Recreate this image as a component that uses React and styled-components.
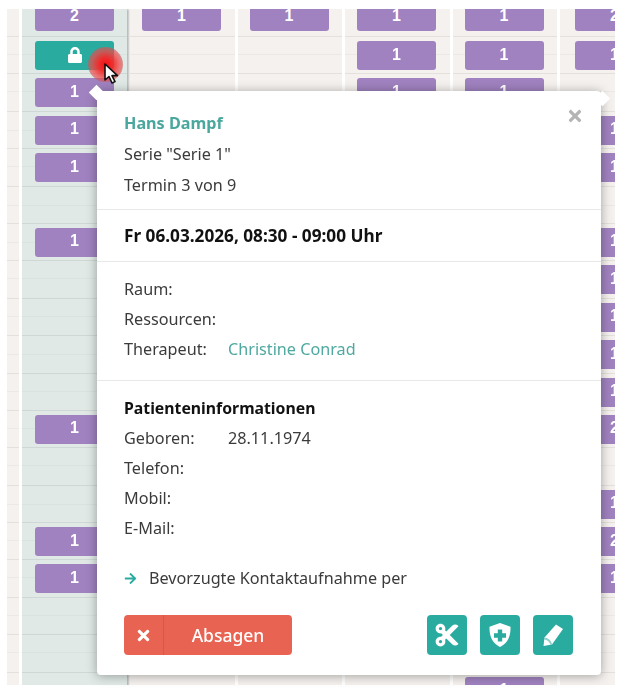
import React from "react";
import styled, { createGlobalStyle } from "styled-components";
import { FaLock, FaTimes, FaCut, FaArrowRight } from "react-icons/fa";

const GlobalStyle = createGlobalStyle`
  html, body {
    margin: 0;
    padding: 0;
    background: #fff;
  }
  * {
    box-sizing: border-box;
  }
`;

const Page = styled.div`
  position: relative;
  width: 623px;
  height: 690px;
  padding: 9px 8px 5px 7px;
  overflow: hidden;
  font-family: "Noto Sans", "Open Sans", sans-serif;
  filter: blur(0.4px);
`;

const Calendar = styled.div`
  display: grid;
  grid-template-columns: 12px 105px repeat(4, 104.5px) 55px;
  column-gap: 3px;
  height: 676px;
  overflow: hidden;
`;

const Column = styled.div`
  background: ${(props) => (props.$today ? "#e0e9e6" : "#f4f1ee")};
  box-shadow: ${(props) => (props.$today ? "2px 0 2px rgba(0, 0, 0, 0.28)" : "none")};
`;

const Slot = styled.div`
  height: 37.4px;
  padding: 4px 0 0 ${(props) => props.$inset || 12}px;
  border-top: 1px solid ${(props) => (props.$today ? "#cfd8d5" : "#e4e0dc")};
  background: linear-gradient(
    to bottom,
    transparent 17.5px,
    ${(props) => (props.$today ? "#d8e2df" : "#ece8e5")} 17.5px,
    ${(props) => (props.$today ? "#d8e2df" : "#ece8e5")} 18.5px,
    transparent 18.5px
  );
`;

const FirstSlot = styled.div`
  height: 27px;
  padding: 0 0 5px ${(props) => props.$inset || 12}px;
  display: flex;
  align-items: flex-end;
  overflow: hidden;
`;

const Event = styled.div`
  flex: none;
  width: 79px;
  height: 29px;
  padding-bottom: 2px;
  display: flex;
  align-items: center;
  justify-content: center;
  border-radius: 3px;
  background: ${(props) => (props.$locked ? "#2aaba0" : "#9f82bf")};
  color: #fff;
  font: bold 16px "Liberation Sans", Arial, sans-serif;
`;

const Popover = styled.div`
  position: absolute;
  left: 97px;
  top: 91px;
  width: 504px;
  height: 584px;
  background: #fff;
  border-radius: 4px;
  box-shadow: 0 1px 11px rgba(0, 0, 0, 0.34);
  color: #3b3b3b;
  font-size: 16.2px;
`;

const Pointer = styled.div`
  position: absolute;
  top: ${(props) => props.$top}px;
  left: ${(props) => props.$left}px;
  width: 11px;
  height: 11px;
  background: #fff;
  transform: rotate(45deg);
`;

const CloseButton = styled.div`
  position: absolute;
  top: 16px;
  right: 17px;
  display: flex;
  color: #b4b4b4;
  font-size: 18px;
`;

const Section = styled.div`
  position: relative;
  padding: ${(props) => props.$pad};
  border-bottom: ${(props) => (props.$last ? "none" : "1px solid #e8e8e8")};
`;

const Line = styled.div`
  height: ${(props) => props.$height || 30}px;
  line-height: ${(props) => props.$height || 30}px;
  white-space: nowrap;
`;

const PatientName = styled(Line)`
  color: #4aa79e;
  font-weight: 700;
`;

const Heading = styled(Line)`
  color: #111;
  font-weight: 700;
  font-size: ${(props) => props.$size || 15.8}px;
`;

const Row = styled.div`
  display: grid;
  grid-template-columns: 104px 1fr;
  height: 30px;
  line-height: 30px;
`;

const LinkText = styled.span`
  color: #4fa9a0;
`;

const ContactLine = styled.div`
  display: flex;
  align-items: center;
  gap: 12px;
  height: 30px;
  margin-top: 20px;
  svg {
    color: #2aaba0;
    font-size: 13px;
  }
`;

const Footer = styled.div`
  display: flex;
  align-items: center;
  justify-content: space-between;
  margin-top: 22px;
  padding-right: 1px;
`;

const CancelButton = styled.div`
  display: flex;
  width: 168px;
  height: 40px;
  border-radius: 4px;
  background: #e96352;
  color: #fff;
  font-size: 17.5px;
  font-weight: 500;
`;

const CancelIcon = styled.div`
  display: flex;
  align-items: center;
  justify-content: center;
  width: 40px;
  border-right: 1px solid #d65847;
  font-size: 17px;
`;

const CancelLabel = styled.div`
  flex: 1;
  text-align: center;
  line-height: 40px;
`;

const Actions = styled.div`
  display: flex;
  gap: 13px;
`;

const IconButton = styled.div`
  display: flex;
  align-items: center;
  justify-content: center;
  width: 40px;
  height: 40px;
  border-radius: 4px;
  background: #2aaba0;
  color: #fff;
  font-size: 26px;
`;

const Halo = styled.div`
  position: absolute;
  left: 88px;
  top: 47px;
  width: 35px;
  height: 35px;
  border-radius: 50%;
  background: radial-gradient(circle, #f01212 0%, #f02a2a 25%, rgba(240, 70, 70, 0.75) 55%, rgba(160, 110, 110, 0.5) 85%, rgba(150, 120, 120, 0.25) 100%);
`;

const Cursor = styled.svg`
  position: absolute;
  left: 104px;
  top: 63px;
`;

const ShieldPlus = () => (
  <svg width="24" height="26" viewBox="0 0 24 26">
    <path fill="#fff" d="M12 1 L22.5 4.8 C22.8 13 20.5 21 12 25 C3.5 21 1.2 13 1.5 4.8 Z" />
    <path fill="#2aaba0" d="M9.8 7.5h4.4v3.8H18v4.4h-3.8v3.8H9.8v-3.8H6v-4.4h3.8z" />
  </svg>
);

const Pencil = () => (
  <svg width="22" height="24" viewBox="0 0 22 24">
    <path fill="#fff" d="M14 1.5 L21 6 L10 21.5 L1.5 23 L2.5 14.5 Z" />
    <path fill="#2aaba0" opacity="0.55" d="M2.5 14.5 C5.5 14.5 9.5 17.5 10 21.5 L8.5 21.8 C7.8 19 5.2 16.8 2.3 16.4 Z" />
  </svg>
);

const dayColumn = { 0: "2", 1: "lock", 2: "1", 3: "1", 4: "1", 6: "1", 11: "1", 14: "1", 15: "1" };

const columns = [
  { events: {} },
  { events: dayColumn, today: true, inset: 13 },
  { events: { 0: "1" } },
  { events: { 0: "1" } },
  { events: { 0: "1", 1: "1", 2: "1" } },
  { events: { 0: "1", 1: "1", 2: "1", 18: "1" } },
  {
    events: { 0: "2", 1: "1", 3: "1", 4: "1", 6: "1", 7: "1", 8: "1", 9: "1", 10: "1", 11: "2", 13: "1", 14: "2", 15: "1" },
    inset: 15,
  },
];

const rows = Array.from({ length: 19 }, (_, i) => i);

const renderEvent = (value) =>
  value === "lock" ? (
    <Event $locked>
      <FaLock size={16} />
    </Event>
  ) : (
    <Event>{value}</Event>
  );

const App = () => {
  return (
    <Page>
      <GlobalStyle />
      <Calendar>
        {columns.map((column, index) => (
          <Column key={index} $today={column.today}>
            {rows.map((row) =>
              row === 0 ? (
                <FirstSlot key={row} $inset={column.inset}>
                  {column.events[row] && renderEvent(column.events[row])}
                </FirstSlot>
              ) : (
                <Slot key={row} $inset={column.inset} $today={column.today}>
                  {column.events[row] && renderEvent(column.events[row])}
                </Slot>
              )
            )}
          </Column>
        ))}
      </Calendar>

      <Popover>
        <CloseButton>
          <FaTimes />
        </CloseButton>
        <Section $pad="17px 27px 8px">
          <PatientName $height={31}>Hans Dampf</PatientName>
          <Line $height={31}>Serie "Serie 1"</Line>
          <Line $height={31}>Termin 3 von 9</Line>
        </Section>
        <Section $pad="11px 27px 10px">
          <Heading $size={17.2}>Fr 06.03.2026, 08:30 - 09:00 Uhr</Heading>
        </Section>
        <Section $pad="12px 27px 16px">
          <Row>
            <span>Raum:</span>
          </Row>
          <Row>
            <span>Ressourcen:</span>
          </Row>
          <Row>
            <span>Therapeut:</span>
            <LinkText>Christine Conrad</LinkText>
          </Row>
        </Section>
        <Section $pad="12px 27px 0" $last>
          <Heading>Patienteninformationen</Heading>
          <Row>
            <span>Geboren:</span>
            <span>28.11.1974</span>
          </Row>
          <Row>
            <span>Telefon:</span>
          </Row>
          <Row>
            <span>Mobil:</span>
          </Row>
          <Row>
            <span>E-Mail:</span>
          </Row>
          <ContactLine>
            <FaArrowRight />
            <span>Bevorzugte Kontaktaufnahme per</span>
          </ContactLine>
          <Footer>
            <CancelButton>
              <CancelIcon>
                <FaTimes />
              </CancelIcon>
              <CancelLabel>Absagen</CancelLabel>
            </CancelButton>
            <Actions>
              <IconButton>
                <FaCut />
              </IconButton>
              <IconButton>
                <ShieldPlus />
              </IconButton>
              <IconButton>
                <Pencil />
              </IconButton>
            </Actions>
          </Footer>
        </Section>
      </Popover>
      <Pointer $left={91} $top={87} />
      <Pointer $left={597} $top={93} />

      <Halo />
      <Cursor width="17" height="22" viewBox="0 0 17 22">
        <path d="M1 1 L1 17 L5 13.5 L8 20 L11 18.6 L8 12.6 L13.5 12.6 Z" fill="#fff" stroke="#111" strokeWidth="1.6" strokeLinejoin="round" />
      </Cursor>
    </Page>
  );
};

export default App;
